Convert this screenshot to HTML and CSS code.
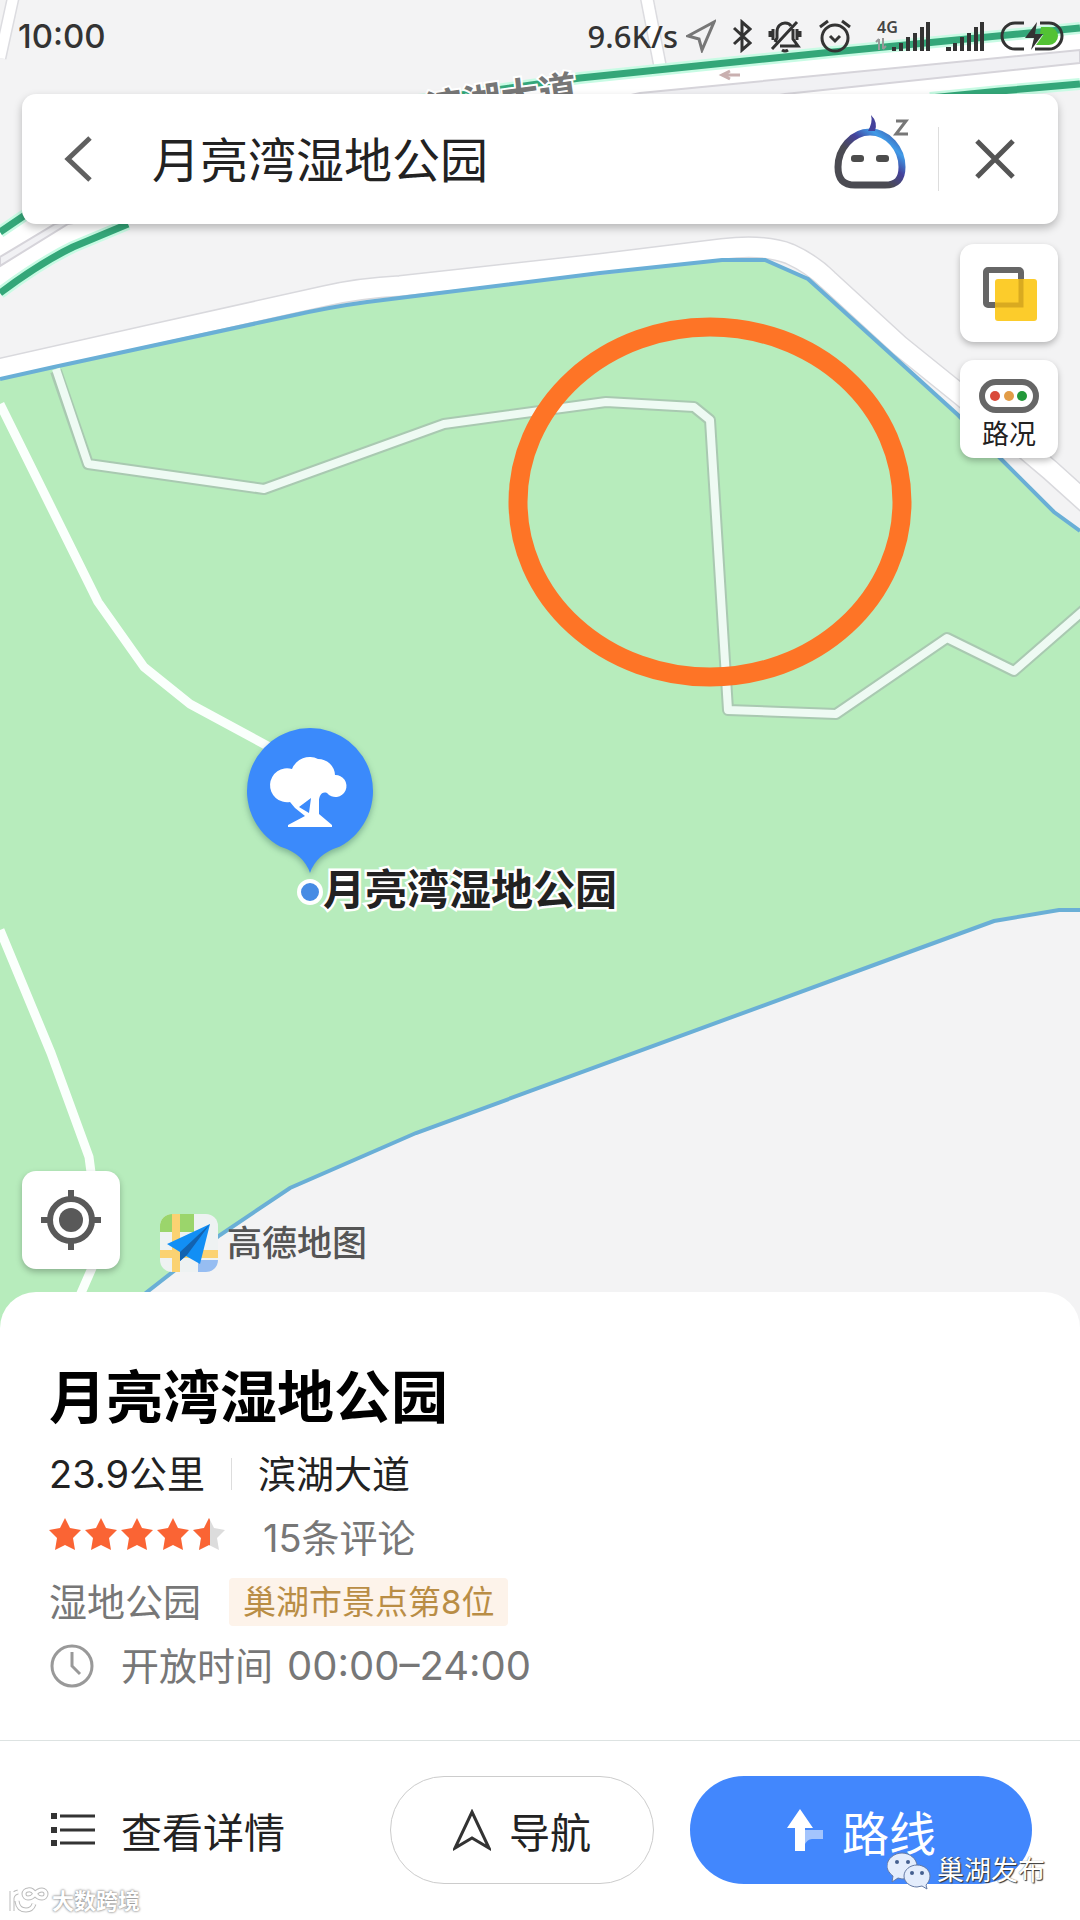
FILE: index.html
```html
<!DOCTYPE html>
<html lang="zh-CN">
<head>
<meta charset="utf-8">
<meta name="viewport" content="width=device-width, initial-scale=1">
<title>月亮湾湿地公园</title>
<link rel="stylesheet" href="styles.css">
</head>
<body>
<main class="app">
  <section class="map" aria-label="地图">
    <svg class="map-canvas" viewBox="0 0 1080 1340" preserveAspectRatio="xMidYMin slice">
      <rect width="1080" height="1340" fill="#f3f3f4"/>
      <!-- minor roads at the top -->
      <path d="M14-6 0 58" fill="none" stroke="#dcdce0" stroke-width="13"/>
      <path d="M14-6 0 58" fill="none" stroke="#fff" stroke-width="10"/>
      <path d="M646-6 662 76" fill="none" stroke="#dcdce0" stroke-width="14"/>
      <path d="M646-6 662 76" fill="none" stroke="#fff" stroke-width="11"/>
      <!-- highway -->
      <path d="M0 232 25 215 200 100 440 98 580 78 833 52 1080 28V84L1000 92 600 150 128 224 73 247 0 293Z" fill="#fff"/>
      <path d="M0 257 55 224 640 93 1080 50V63L785 94 68 224 0 266Z" fill="#f1f1f4" stroke="#d6d4da" stroke-width="2"/>
      <path d="M0 232 25 215 200 120 440 98 580 78 833 52 1080 28M0 293Q40 263 73 247L128 224M930 98 1000 91 1080 84" fill="none" stroke="#c8fbe4" stroke-width="12"/>
      <path d="M0 232 25 215 200 120 440 98 580 78 833 52 1080 28M0 293Q40 263 73 247L128 224M930 98 1000 91 1080 84" fill="none" stroke="#34a779" stroke-width="7"/>
      <path d="M740 75H722M730 71 722 75 730 79" fill="none" stroke="#c9b0b0" stroke-width="3"/>
      <text class="road-label" transform="translate(428 123) rotate(-8)">滨湖大道</text>
      <!-- park -->
      <path d="M0 379 54 367 290 316Q330 307 367 302L600 273 722 260H765L808 279 828 297 958 415 1002 460 1054 512 1080 531V910H1059L994 921 912 951 416 1133 290 1188 220 1235 147 1292 90 1340H0Z" fill="#b7ecbc"/>
      <path d="M-10 371 150 335 325 296 Q360 288 400 286L600 264 722 249Q765 244 790 254 Q812 264 828 280L900 346 962 396 1050 470 1090 506" fill="none" stroke="#d9d9dd" stroke-width="22"/>
      <path d="M-10 371 150 335 325 296 Q360 288 400 286L600 264 722 249Q765 244 790 254 Q812 264 828 280L900 346 962 396 1050 470 1090 506" fill="none" stroke="#fff" stroke-width="19"/>
      <path d="M0 379 54 367 290 316Q330 307 367 302L600 273 722 260H765L808 279 828 297 958 415 1002 460 1054 512 1080 531M1080 910H1059L994 921 912 951 416 1133 290 1188 220 1235 147 1292 90 1340" fill="none" stroke="#6aafd6" stroke-width="4"/>
      <g fill="none" stroke-linejoin="round">
        <path d="M56 371 88 464 264 489 444 424 606 402 694 407 710 420 728 710 836 714 947 638 1014 671 1084 610" stroke="#a9c9b1" stroke-width="12"/>
        <path d="M56 369 88 464 264 489 444 424 606 402 694 407 710 420 728 710 836 714 947 638 1014 671 1084 610" stroke="#eefaf3" stroke-width="8"/>
        <path d="M0 404 98 602 144 667 190 704 275 750M0 930 51 1053 89 1157 92 1180V1268L78 1300" stroke="#fafffc" stroke-width="9"/>
      </g>
      <ellipse cx="710" cy="502" rx="192" ry="175" fill="none" stroke="#fe7426" stroke-width="19"/>
      <!-- place pin -->
      <g class="pin">
        <path d="M310 728a63 63 0 0 1 30 118.400Q316 854 310 873Q304 854 280 846.400A63 63 0 0 1 310 728Z" fill="#3b8afb"/>
        <path d="M290 802a17 17 0 1 1 2-33 19 19 0 0 1 26-10 17 17 0 0 1 17 16 11 11 0 1 1-8 18c-6-2-8 4-8 8v13l13 11v2h-44v-2l17-9-10-8Zm9 5 10 6 2-15Z" fill="#fff" fill-rule="evenodd"/>
      </g>
      <circle cx="310" cy="892" r="11" fill="#478be4" stroke="#fff" stroke-width="4"/>
      <text class="pin-label" x="323" y="905">月亮湾湿地公园</text>
    </svg>

    <header class="status">
      <time class="clock">10:00</time>
      <div class="status-icons">
        <span class="speed">9.6K/s</span>
        <svg width="30" height="34" viewBox="0 0 30 34"><path d="M2 17 28 3 16 31 13 20Z" fill="none" stroke="#777" stroke-width="3"/></svg>
        <svg width="20" height="34" viewBox="0 0 20 34"><path d="M2 9 18 24 10 31V3l8 7L2 25" fill="none" stroke="#333" stroke-width="3"/></svg>
        <svg width="34" height="34" viewBox="0 0 34 34"><path d="M4 30 29 3M25 10v10l5 7H12M7 23l2-4v-6c0-6 4-9 8-9 3 0 5 1 6 3M2 12v6M5 10v11M32 12v6M29 10v11M14 31q3 2 6 0" fill="none" stroke="#333" stroke-width="3"/></svg>
        <svg width="34" height="34" viewBox="0 0 34 34"><circle cx="17" cy="19" r="13" fill="none" stroke="#333" stroke-width="3"/><path d="M12 17l5 5 5-5M2 8l8-6M32 8l-8-6" fill="none" stroke="#333" stroke-width="3"/></svg>
        <svg width="62" height="44" viewBox="0 -5 62 44"><text class="net" x="9" y="14">4G</text><path d="M11 20v11M8 23l3-3M15 19v11M18 27l-3 3" fill="none" stroke="#999" stroke-width="2"/><path d="M24 28h4v4h-4zM31 24h4v8h-4zM38 18h4v14h-4zM45 14h4v18h-4zM52 8h4v24h-4zM58 3h4v29h-4z" fill="#333"/></svg>
        <svg width="38" height="34" viewBox="0 0 38 34"><path d="M0 28h5v4H0zM7 24h4v8H7zM14 18h4v14h-4zM21 14h4v18h-4zM28 8h4v24h-4zM34 3h4v29h-4z" fill="#333"/></svg>
        <svg width="64" height="34" viewBox="0 0 64 34"><path d="M24 4H15a13 13 0 0 0 0 26h9M40 4h9a13 13 0 0 1 0 26H35" fill="none" stroke="#333" stroke-width="3"/><path d="M41 8h8a9 9 0 0 1 0 18H36l8-11h-4Z" fill="#53c234"/><path d="M37 3 25 19h9l-3 12 12-16h-8Z" fill="#333"/></svg>
      </div>
    </header>

    <div class="search">
      <button class="icon-btn back" type="button" aria-label="返回"><svg width="28" height="46" viewBox="0 0 28 46"><path d="M26 2 4 23 26 44" fill="none" stroke="#606060" stroke-width="5"/></svg></button>
      <input class="query" type="text" aria-label="搜索地点" value="月亮湾湿地公园">
      <button class="icon-btn assistant" type="button" aria-label="语音助手">
        <svg width="76" height="76" viewBox="0 0 76 76">
          <defs><linearGradient id="face" x1="0" y1="1" x2="1" y2="0"><stop offset="0.400" stop-color="#4b4b52"/><stop offset="0.600" stop-color="#44419b"/><stop offset="0.780" stop-color="#409be8"/><stop offset="1" stop-color="#3e4799"/></linearGradient></defs>
          <path d="M36 18C18 18 4 35 4 53c0 13 6 18 17 18h30c11 0 17-5 17-18C68 35 54 18 36 18Z" fill="none" stroke="url(#face)" stroke-width="7"/>
          <path d="M34 17q5-9 3-16 7 7 4 16Z" fill="#44419b"/>
          <rect x="17" y="41" width="13" height="7" rx="3" fill="#4d4d4d"/><rect x="42" y="41" width="13" height="7" rx="3" fill="#4d4d4d"/>
          <path d="M62 7h10L62 20h12" fill="none" stroke="#777" stroke-width="3"/>
        </svg>
      </button>
      <button class="icon-btn close" type="button" aria-label="关闭"><svg width="42" height="42" viewBox="0 0 42 42"><path d="M3 3 39 39M39 3 3 39" fill="none" stroke="#555" stroke-width="5"/></svg></button>
    </div>

    <div class="tools">
      <button class="tool" type="button" aria-label="图层"><svg width="56" height="56" viewBox="0 0 56 56"><rect x="5" y="5" width="35" height="35" rx="2" fill="none" stroke="#666" stroke-width="6"/><rect x="14" y="14" width="42" height="42" rx="3" fill="#fccc2b"/><path d="M40 14v26H14" fill="none" stroke="#d9aa20" stroke-width="5"/></svg></button>
      <button class="tool traffic" type="button"><svg width="60" height="34" viewBox="0 0 60 34"><rect x="3" y="3" width="54" height="28" rx="14" fill="#fff" stroke="#666" stroke-width="6"/><circle cx="16" cy="17" r="5" fill="#d9493a"/><circle cx="30" cy="17" r="5" fill="#e29c47"/><circle cx="43" cy="17" r="5" fill="#23983a"/></svg><span>路况</span></button>
    </div>

    <div class="map-foot">
      <button class="tool" type="button" aria-label="定位"><svg width="62" height="62" viewBox="0 0 62 62"><circle cx="31" cy="31" r="21" fill="none" stroke="#595959" stroke-width="6"/><circle cx="31" cy="31" r="12" fill="#595959"/><path d="M31 1v10M31 51v10M1 31h10M51 31h10" stroke="#595959" stroke-width="6"/></svg></button>
      <div class="brand">
        <svg width="58" height="58" viewBox="0 0 58 58">
          <clipPath id="tile"><rect width="58" height="58" rx="12"/></clipPath>
          <g clip-path="url(#tile)"><rect width="58" height="58" fill="#eef2f2"/><path d="M0 0h34v18H0Z" fill="#9bd56b"/><path d="M16 0v58M0 40h58" stroke="#fbd272" stroke-width="8"/><path d="M38 58V46h20v12Z" fill="#96bdf2"/></g>
          <path d="M50 10 7 30 20 38 20 47 26 42 40 50Z" fill="#128ff5"/><path d="M50 10 20 38v9l7-6Z" fill="#1262b0"/>
        </svg>
        <span>高德地图</span>
      </div>
    </div>
  </section>

  <section class="sheet">
    <div class="info">
      <h1>月亮湾湿地公园</h1>
      <p class="row strong"><span>23.9公里</span><i class="sep"></i><span>滨湖大道</span></p>
      <p class="row rating">
        <svg width="176" height="34" viewBox="0 0 176 34" role="img" aria-label="4.5 星">
          <defs><path id="star" d="m16 1 5 10 11 2-8 8 2 12-10-5-10 5 2-12-8-8 11-2Z"/><clipPath id="half"><path d="M0 0h17v34H0Z"/></clipPath></defs>
          <g fill="#fa6434"><use href="#star"/><use href="#star" x="36"/><use href="#star" x="72"/><use href="#star" x="108"/></g>
          <use href="#star" x="144" fill="#dcdcdc"/><g transform="translate(144)"><use href="#star" fill="#fa6434" clip-path="url(#half)"/></g>
        </svg>
        <a href="#reviews">15条评论</a>
      </p>
      <p class="row kind"><span>湿地公园</span><span class="badge">巢湖市景点第8位</span></p>
      <p class="row hours">
        <svg width="46" height="46" viewBox="0 0 46 46"><circle cx="23" cy="23" r="20" fill="none" stroke="#999" stroke-width="3"/><path d="M23 9v14l8 8" fill="none" stroke="#999" stroke-width="3"/></svg>
        <span>开放时间</span><span class="time">00:00–24:00</span>
      </p>
    </div>
    <nav class="actions">
      <a class="details" href="#details"><svg width="46" height="36" viewBox="0 0 46 36"><path d="M1 1h6v6H1zM1 15h6v6H1zM1 28h6v6H1z" fill="#333"/><path d="M10 4h35M10 18h35M10 31h35" stroke="#333" stroke-width="3"/></svg>查看详情</a>
      <button class="pill" type="button"><svg width="38" height="42" viewBox="0 0 38 42"><path d="M19 3 36 39 19 29 2 39Z" fill="none" stroke="#333" stroke-width="3"/></svg>导航</button>
      <button class="pill primary" type="button"><svg width="38" height="44" viewBox="0 0 38 44"><path d="M18 38V22h19v9H26q-5 0-8 7Z" fill="#a3c4fd"/><path d="M14 1 27 20H19V43H9V20H1Z" fill="#fff"/></svg>路线</button>
    </nav>
  </section>

  <div class="mark mark-left">
    <svg width="42" height="28" viewBox="0 0 42 28"><defs><path id="swirl" d="M4 4v20M4 11q1-5 6-6M9 14q1 9 9 9 6 0 8-6M27 7q-3-5-7-4a4 4 0 1 0 0 8q4 0 7-4t7-4a4 4 0 1 1 0 8q-4 0-7-4"/></defs><g fill="none"><use href="#swirl" stroke="#bbb" stroke-width="5"/><use href="#swirl" stroke="#fff" stroke-width="3"/></g></svg>
    <span>大数跨境</span>
  </div>
  <div class="mark mark-right">
    <svg width="44" height="38" viewBox="0 0 44 38"><path d="M15 1c8 0 15 6 15 13S23 27 15 27l-4-1-6 4 1-6C3 22 0 18 0 14 0 7 7 1 15 1Z" fill="#e4edfc" stroke="#647aa5"/><path d="M30 13c7 0 13 5 13 11 0 4-2 7-4 9l1 4-5-3-5 1c-7 0-13-5-13-11s6-11 13-11Z" fill="#e4edfc" stroke="#647aa5"/><g fill="#46608f"><circle cx="10" cy="10" r="2"/><circle cx="21" cy="10" r="2"/><circle cx="25" cy="21" r="2"/><circle cx="35" cy="21" r="2"/></g></svg>
    <span>巢湖发布</span>
  </div>
</main>
</body>
</html>
```
FILE: styles.css
```css
* { box-sizing: border-box; }

body {
  margin: 0;
  background: #fff;
  color: #222;
  font-family: Inter, "Noto Sans CJK SC", sans-serif;
}

h1, p { margin: 0; }
svg { display: block; flex: none; }
a { color: inherit; text-decoration: none; }

button {
  padding: 0;
  border: 0;
  background: none;
  color: inherit;
  font: inherit;
}

.app {
  position: relative;
  display: flex;
  flex-direction: column;
  min-height: 100vh;
}

/* Map */
.map {
  position: relative;
  flex: 1;
  display: flex;
  flex-direction: column;
  padding-bottom: 68px;
}

.map-canvas {
  position: absolute;
  inset: 0;
  width: 100%;
  height: 100%;
}

.map > :not(.map-canvas) { position: relative; }

.road-label {
  font-size: 38px;
  font-weight: 700;
  fill: #777;
  stroke: #fff;
  stroke-width: 4px;
  paint-order: stroke;
}

.pin { filter: drop-shadow(0 3px 3px rgba(40, 90, 80, 0.4)); }

.pin-label {
  font-size: 42px;
  font-weight: 700;
  fill: #222;
  stroke: #fff;
  stroke-width: 5px;
  paint-order: stroke;
}

.status {
  display: flex;
  align-items: center;
  justify-content: space-between;
  height: 72px;
  padding: 0 16px 0 18px;
  color: #333;
}

.clock { font-size: 33px; font-weight: 500; }

.status-icons {
  display: flex;
  align-items: center;
  gap: 16px;
}

.speed {
  margin-right: -8px;
  font-family: "Noto Sans", sans-serif;
  font-size: 31px;
  font-weight: 500;
}

.net { font: 600 16px "Noto Sans", sans-serif; fill: #444; }

.search {
  display: flex;
  align-items: center;
  height: 130px;
  margin: 22px 22px 0;
  border-radius: 14px;
  background: #fff;
  box-shadow: 0 4px 8px rgba(0, 0, 0, 0.25);
}

.icon-btn {
  display: flex;
  align-items: center;
  justify-content: center;
  height: 100%;
}

.back { width: 112px; }

.query {
  flex: 1;
  min-width: 0;
  padding: 0 0 4px 18px;
  border: 0;
  background: none;
  color: #222;
  font: 400 48px "Noto Sans CJK SC", sans-serif;
}

.assistant { width: 104px; padding: 0 28px 14px 0; }

.close {
  width: 120px;
  height: 64px;
  padding-right: 8px;
  border-left: 1px solid #ddd;
}

.tools {
  display: flex;
  flex-direction: column;
  align-items: flex-end;
  gap: 18px;
  padding: 20px 22px;
}

.tool {
  display: flex;
  flex-direction: column;
  align-items: center;
  justify-content: center;
  width: 98px;
  height: 98px;
  border-radius: 14px;
  background: #fff;
  box-shadow: 0 3px 6px rgba(0, 0, 0, 0.25);
  font-size: 27px;
  line-height: 36px;
}

.traffic { padding-top: 14px; }
.tool span { margin-top: 4px; }

.map-foot {
  display: flex;
  align-items: center;
  gap: 40px;
  margin-top: auto;
  padding: 0 22px;
}

.brand {
  display: flex;
  align-items: center;
  gap: 9px;
  padding-top: 46px;
  color: #555;
  font-size: 35px;
  font-weight: 500;
  line-height: 58px;
}

/* Place sheet */
.sheet {
  position: relative;
  margin-top: -48px;
  border-radius: 36px 36px 0 0;
  background: #fff;
}

.info { padding: 68px 49px 42px; }

h1 {
  margin-bottom: 6px;
  color: #000;
  font-size: 57px;
  font-weight: 700;
  line-height: 76px;
}

.row {
  display: flex;
  align-items: center;
  height: 64px;
  color: #777;
  font-size: 38px;
  line-height: 56px;
}

.strong { gap: 26px; color: #222; }
.sep { width: 1px; height: 32px; background: #ddd; }
.rating { gap: 38px; }
.rating svg { margin-bottom: 8px; }
.kind { gap: 28px; }
.hours { gap: 14px; }
.hours svg { margin-right: 12px; }
.time { font-size: 40px; }

.badge {
  padding: 0 14px;
  border-radius: 4px;
  background: #fdf3ea;
  color: #b98d45;
  font-size: 33px;
  line-height: 48px;
}

.actions {
  display: grid;
  grid-template-columns: 304fr 264fr 342fr;
  gap: 36px;
  padding: 35px 48px 36px 50px;
  border-top: 1px solid #dde3e2;
  font-size: 41px;
}

.details,
.pill {
  display: flex;
  align-items: center;
  height: 108px;
}

.details { gap: 25px; }

.pill {
  justify-content: center;
  gap: 18px;
  border: 1px solid #ccc;
  border-radius: 54px;
}

.primary {
  border: 0;
  background: #4287fd;
  color: #fff;
  font-size: 47px;
}

/* Source marks over the page */
.mark {
  position: absolute;
  display: flex;
  align-items: center;
  color: #fff;
}

.mark-left {
  bottom: 4px;
  left: 8px;
  gap: 2px;
  font-size: 22px;
  font-weight: 700;
  line-height: 30px;
  text-shadow: 0 0 2px #888, 0 0 3px #999;
}

.mark-right {
  right: 35px;
  bottom: 30px;
  gap: 6px;
  font-size: 27px;
  line-height: 38px;
  text-shadow: 1px 1px 1px #333, 0 0 1px #555;
}
```
